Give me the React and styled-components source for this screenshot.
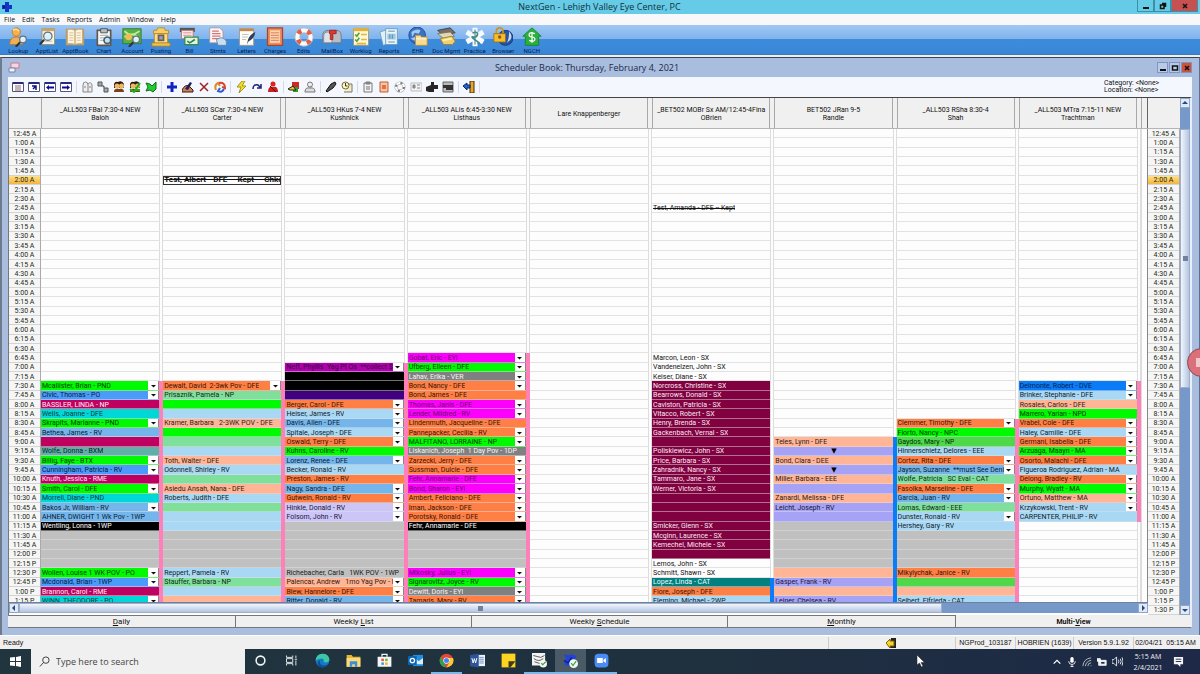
import { useState } from "react";
import styled, { createGlobalStyle } from "styled-components";

const ROWS = 52;

const tones = {
  white: ["transparent", "#111"],
  green: ["#00fa00", "#033803"],
  leaf: ["#4fd84a", "#08280a"],
  mint: ["#7fe09b", "#102a18"],
  blue: ["#4a9bfb", "#061a33"],
  royal: ["#0a7cf8", "#04204a"],
  sky: ["#74b5ec", "#0a1c2c"],
  pale: ["#a8d8f3", "#12202a"],
  cyan: ["#00d8d8", "#033838"],
  sage: ["#5fb0a8", "#08221f"],
  teal: ["#008080", "#f0fafa"],
  crimson: ["#c00060", "#fff0f7"],
  maroon: ["#800040", "#fbe8f1"],
  orange: ["#ff7f45", "#381402"],
  peach: ["#ffb596", "#301a12"],
  magenta: ["#fb00fb", "#6c006c"],
  plum: ["#b000b0", "#340034"],
  lilac: ["#ccc5f8", "#1b183c"],
  violet: ["#a6a2f5", "#17153c"],
  indigo: ["#400080", "#fff"],
  gray: ["#808080", "#f6f6f6"],
  silver: ["#c0c0c0", "#181818"],
  black: ["#000", "#fff"],
};

const times = Array.from({ length: ROWS }, (_, i) => {
  const minutes = 45 + i * 15;
  const hour = Math.floor(minutes / 60);
  const mm = String(minutes % 60).padStart(2, "0");
  return `${hour % 12 === 0 ? 12 : hour % 12}:${mm} ${hour < 12 ? "A" : "P"}`;
});

// each slot: [tone, text, has menu button]
const lunch = (n) => Array.from({ length: n }, () => ["silver"]);

const columns = [
  {
    title: "_ALL503 FBal 7:30-4 NEW",
    name: "Baloh",
    start: 27,
    strip: ["#ff80b8", 27, 52],
    slots: [
      ["green", "Mcallister, Brian - PND", 1],
      ["blue", "Civic, Thomas - PO", 1],
      ["crimson", "BASSLER, LINDA - NP"],
      ["cyan", "Wells, Joanne - DFE"],
      ["green", "Skrapits, Marianne - PND", 1],
      ["sky", "Bethea, James - RV"],
      ["crimson"],
      ["sage", "Wolfe, Donna - BXM"],
      ["green", "Billig, Faye - BTX", 1],
      ["blue", "Cunningham, Patricia - RV", 1],
      ["crimson", "Knuth, Jessica - RME"],
      ["green", "Smith, Carol - DFE", 1],
      ["cyan", "Morrell, Diane - PND"],
      ["sky", "Bakos Jr, William - RV", 1],
      ["sky", "AHNER, DWIGHT 1 Wk Pov - 1WP"],
      ["black", "Wentling, Lonna - 1WP"],
      ...lunch(4),
      ["green", "Wollen, Louise 1 WK POV - PO", 1],
      ["blue", "Mcdonald, Brian - 1WP", 1],
      ["crimson", "Brannon, Carol - RME"],
      ["cyan", "WINN, THEODORE - PO", 1],
      ["cyan"],
    ],
  },
  {
    title: "_ALL503 SCar 7:30-4 NEW",
    name: "Carter",
    start: 27,
    strip: ["#ff80b8", 27, 52],
    test: { row: 5, text: "Test, Albert - DFE -- Kept -- Chko", boxed: true },
    slots: [
      ["orange", "Dewalt, David  2-3wk Pov - DFE", 1],
      ["mint", "Prisaznik, Pamela - NP"],
      ["green"],
      ["pale"],
      ["peach", "Kramer, Barbara   2-3WK POV - DFE"],
      ["green"],
      ["mint"],
      ["pale"],
      ["peach", "Toth, Walter - DFE"],
      ["pale", "Odonnell, Shirley - RV"],
      ["mint"],
      ["peach", "Asiedu Ansah, Nana - DFE"],
      ["pale", "Roberts, Judith - DFE"],
      ["mint"],
      ["pale"],
      ["pale"],
      ...lunch(4),
      ["pale", "Reppert, Pamela - RV"],
      ["mint", "Stauffer, Barbara - NP"],
      ["pale"],
      ["peach"],
      ["peach"],
    ],
  },
  {
    title: "_ALL503 HKus 7-4 NEW",
    name: "Kushnick",
    start: 25,
    strip: ["#ff80b8", 25, 52],
    slots: [
      ["plum", "Neff, Phyllis  Yag PI Os  **collect $2", 1],
      ["black"],
      ["black"],
      ["indigo"],
      ["orange", "Berger, Carol - DFE", 1],
      ["pale", "Heiser, James - RV", 1],
      ["sky", "Davis, Allen - DFE", 1],
      ["pale", "Spitale, Joseph - DFE", 1],
      ["orange", "Oswald, Terry - DFE", 1],
      ["green", "Kuhns, Caroline - RV"],
      ["sky", "Lorenz, Renee - DFE", 1],
      ["pale", "Becker, Ronald - RV"],
      ["orange", "Preston, James - RV"],
      ["sky", "Nagy, Sandra - DFE", 1],
      ["orange", "Gutwein, Ronald - RV", 1],
      ["lilac", "Hinkle, Donald - RV", 1],
      ["lilac", "Folsom, John - RV", 1],
      ...lunch(5),
      ["silver", "Richebacher, Carla   1WK POV - 1WP"],
      ["peach", "Palencar, Andrew   1mo Yag Pov - R", 1],
      ["orange", "Blew, Hannelore - DFE", 1],
      ["sky", "Ritter, Donald - RV", 1],
      ["sky"],
    ],
  },
  {
    title: "_ALL503 ALis 6:45-3:30 NEW",
    name: "Listhaus",
    start: 24,
    strip: ["#ff80b8", 24, 52],
    slots: [
      ["magenta", "Gobat, Eric - EYI", 1],
      ["green", "Ufberg, Eileen - DFE", 1],
      ["gray", "Lahav, Erika - VER", 1],
      ["orange", "Bond, Nancy - DFE", 1],
      ["orange", "Bond, James - DFE"],
      ["magenta", "Thomas, Janis - DFE", 1],
      ["magenta", "Lender, Mildred - RV", 1],
      ["orange", "Lindenmuth, Jacqueline - DFE"],
      ["orange", "Pannepacker, Cecilia - RV", 1],
      ["green", "MALFITANO, LORRAINE - NP", 1],
      ["gray", "Liskanich, Joseph  1 Day Pov - 1DP"],
      ["orange", "Zarzecki, Jerry - DFE", 1],
      ["orange", "Sussman, Dulcie - DFE", 1],
      ["magenta", "Fehr, Annamarie - DFE", 1],
      ["magenta", "Bond, Sharon - EYI", 1],
      ["orange", "Ambert, Feliciano - DFE", 1],
      ["orange", "Iman, Jackson - DFE", 1],
      ["orange", "Porotsky, Ronald - DFE", 1],
      ["black", "Fehr, Annamarie - DFE"],
      ...lunch(4),
      ["magenta", "Mikosky, Julius - EYI", 1],
      ["green", "Signarovitz, Joyce - RV", 1],
      ["gray", "Dewitt, Doris - EYI", 1],
      ["orange", "Tamaris, Mary - RV", 1],
      ["orange"],
    ],
  },
  { title: "", name: "Lare Knappenberger", start: 52, slots: [] },
  {
    title: "_BET502 MOBr Sx AM/12:45-4Fina",
    name: "OBrien",
    start: 24,
    strip: ["#0a7cf8", 48, 52],
    test: { row: 8, text: "Test, Amanda - DFE -- Kept" },
    slots: [
      ["white", "Marcon, Leon - SX"],
      ["white", "Vandenelzen, John - SX"],
      ["white", "Keiser, Diane - SX"],
      ["maroon", "Norcross, Christine - SX"],
      ["maroon", "Bearrows, Donald - SX"],
      ["maroon", "Caviston, Patricia - SX"],
      ["maroon", "Vitacco, Robert - SX"],
      ["maroon", "Henry, Brenda - SX"],
      ["maroon", "Gackenbach, Vernal - SX"],
      ["maroon"],
      ["maroon", "Poliskiewicz, John - SX"],
      ["maroon", "Price, Barbara - SX"],
      ["maroon", "Zahradnik, Nancy - SX"],
      ["maroon", "Tammaro, Jane - SX"],
      ["maroon", "Werner, Victoria - SX"],
      ["maroon"],
      ["maroon"],
      ["maroon"],
      ["maroon", "Smicker, Glenn - SX"],
      ["maroon", "Mcginn, Laurence - SX"],
      ["maroon", "Kemechel, Michele - SX"],
      ["maroon"],
      ["white", "Lemos, John - SX"],
      ["white", "Schmitt, Shawn - SX"],
      ["teal", "Lopez, Linda - CAT"],
      ["orange", "Fiore, Joseph - DFE"],
      ["pale", "Fleming, Michael - 2WP"],
      ["pale"],
    ],
  },
  {
    title: "BET502 JRan 9-5",
    name: "Randle",
    start: 33,
    strip: ["#0a7cf8", 33, 52],
    slots: [
      ["peach", "Teles, Lynn - DFE"],
      ["violet", "▼"],
      ["peach", "Bond, Clara - DEE"],
      ["violet", "▼"],
      ["peach", "Miller, Barbara - EEE"],
      ["violet"],
      ["peach", "Zanardi, Melissa - DFE"],
      ["violet", "Leicht, Joseph - RV"],
      ["violet"],
      ...lunch(5),
      ["peach"],
      ["violet", "Gasper, Frank - RV"],
      ["peach"],
      ["violet", "Leiner, Chelsea - RV"],
      ["violet"],
    ],
  },
  {
    title: "_ALL503 RSha 8:30-4",
    name: "Shah",
    start: 31,
    strip: ["#ff80b8", 31, 52],
    slots: [
      ["orange", "Clemmer, Timothy - DFE", 1],
      ["green", "Fiorto, Nancy - NPC"],
      ["leaf", "Gaydos, Mary - NP"],
      ["pale", "Hinnerschietz, Delores - EEE"],
      ["orange", "Cortez, Rita - DFE", 1],
      ["sky", "Jayson, Suzanne  **must See Denis", 1],
      ["mint", "Wolfe, Patricia   SC Eval - CAT"],
      ["orange", "Fasolka, Marseline - DFE", 1],
      ["sky", "Garcia, Juan - RV", 1],
      ["mint", "Lomas, Edward - EEE"],
      ["pale", "Dunster, Ronald - RV", 1],
      ["pale", "Hershey, Gary - RV"],
      ...lunch(4),
      ["orange", "Mikylychak, Janice - RV"],
      ["leaf"],
      ["peach"],
      ["pale", "Seibert, Elfrieda - CAT"],
      ["pale"],
    ],
  },
  {
    title: "_ALL503 MTra 7:15-11 NEW",
    name: "Trachtman",
    start: 27,
    strip: ["#ff80b8", 27, 42],
    slots: [
      ["royal", "Delmonte, Robert - DVE", 1],
      ["pale", "Brinker, Stephanie - DFE", 1],
      ["peach", "Rosales, Carlos - DFE"],
      ["green", "Marrero, Yarian - NPD"],
      ["orange", "Vrabel, Cole - DFE", 1],
      ["pale", "Haley, Camille - DFE", 1],
      ["orange", "Germani, Isabella - DFE", 1],
      ["green", "Arzuaga, Maayn - MA", 1],
      ["orange", "Osorto, Malachi - DFE", 1],
      ["pale", "Figueroa Rodriguez, Adrian - MA"],
      ["orange", "Delong, Bradley - RV", 1],
      ["green", "Murphy, Wyatt - MA", 1],
      ["peach", "Ortuno, Matthew - MA", 1],
      ["pale", "Krzykowski, Trent - RV", 1],
      ["pale", "CARPENTER, PHILIP - RV"],
    ],
  },
];

const lens = (x, y, r = 4) => (
  <g>
    <path d={`M${x - r} ${y + r}l-4 4`} stroke="#333" strokeWidth="2.5" strokeLinecap="round" />
    <circle cx={x} cy={y} r={r} fill="#d9f0fb" stroke="#62737f" strokeWidth="1.5" />
    <path d={`M${x - 2} ${y - 1}q1-2 3-1`} stroke="#fff" fill="none" />
  </g>
);

const bigIcons = [
  ["Lookup", (
    <g>
      <circle cx="10" cy="6" r="5" fill="#f6b04a" stroke="#bd7720" />
      <path d="M2 21q0-9 8-9t8 9z" fill="#f1ae55" stroke="#b97827" />
      <path d="M6 4q4-3 7 1" stroke="#ffdc9b" strokeWidth="2" fill="none" />
      {lens(18, 15)}
    </g>
  )],
  ["ApptList", (
    <g>
      <path d="M6 2h15v19H6z" fill="#fbf3df" stroke="#9f8d65" />
      <path d="M6 2h15v3H6z" fill="#c7a66b" />
      <path d="M9 8h9M9 17h9" stroke="#9db2c1" />
      {lens(13, 11, 5)}
    </g>
  )],
  ["ApptBook", (
    <g>
      <path d="M1 2h22v20H1z" fill="#c39a67" />
      <path d="M3 3q5-1 9 1v17q-4-2-9-1zM21 3q-5-1-9 1v17q4-2 9-1z" fill="#fff4dc" stroke="#c4aa74" />
      <path d="M5 7h5M5 10h5M5 13h5M5 16h5M14 7h5M14 10h5M14 13h5M14 16h5" stroke="#cdbd9b" />
    </g>
  )],
  ["Chart", (
    <g>
      <rect x="3" y="3" width="18" height="20" rx="1" fill="#5f5750" />
      <path d="M5 5h14v16H5z" fill="#f9f9f5" />
      <path d="M8 2h8v5H8z" fill="#b6bec5" stroke="#444" />
      <path d="M7 10h10M7 13h6M7 16h5" stroke="#8da2b1" />
      <circle cx="16" cy="16" r="4" fill="#bfe5f9" stroke="#4a5b68" strokeWidth="2" />
    </g>
  )],
  ["Account", (
    <g>
      <path d="M1 2h22v18H1z" fill="#59b046" stroke="#2f782b" />
      <path d="M3 5q7 8 18 0M3 12q9-7 18 2" stroke="#c5eb9e" strokeWidth="2" fill="none" />
      <circle cx="8" cy="12" r="4" fill="#f0bd55" />
      {lens(17, 15)}
    </g>
  )],
  ["Posting", (
    <g>
      <path d="M3 8V4h4l1-3h8l1 3h4v4z" fill="#f4cf68" stroke="#b48520" />
      <path d="M4 8h16v12H4z" fill="#f8dc86" stroke="#b48520" />
      <path d="M8 9h8v8H8z" fill="#6e6050" />
      <path d="M10 11h4v4h-4z" fill="#9a9cc5" />
      <path d="M1 19h22v4H1z" fill="#ecc153" stroke="#a87a20" />
    </g>
  )],
  ["Bill", (
    <g>
      <path d="M1 1h18v5H1z" fill="#555" />
      <path d="M3 4h14v10H3z" fill="#fbecec" stroke="#bf6a6a" />
      <path d="M5 7h10M5 10h10" stroke="#d38484" />
      <path d="M7 12h16v9H7z" fill="#e2f5dc" stroke="#318a4b" strokeWidth="1.5" />
      <path d="M10 17l3 2 6-4" stroke="#2c8243" strokeWidth="2" fill="none" />
    </g>
  )],
  ["Stmts", (
    <g>
      <path d="M2 1h12l4 4v14H2z" fill="#fff4f4" stroke="#a79292" />
      <path d="M5 5h8M5 8h10M5 11h10M5 14h10" stroke="#d27474" strokeWidth="1.5" />
      <path d="M10 15q8-5 12 2v5H12z" fill="#c7dff0" stroke="#6682a1" />
    </g>
  )],
  ["Letters", (
    <g>
      <path d="M3 2h17v20H3z" fill="#fffdf5" stroke="#9c958a" />
      <path d="M3 2h17v3H3z" fill="#c98746" />
      <path d="M6 9h8M6 12h7M6 15h5" stroke="#b5b5b5" />
      <path d="M22 6q-1 8-8 11l-2 4 1-5q2-7 9-10z" fill="#2b3f5a" />
    </g>
  )],
  ["Charges", (
    <g>
      <path d="M3 1h18v21H3z" fill="#f08c5a" stroke="#a6452c" strokeWidth="1.5" />
      <path d="M6 4h12v15H6z" fill="#fbd3ae" />
      <path d="M7 7h10M7 10h10M7 13h10M7 16h10" stroke="#d3714f" strokeWidth="1" />
    </g>
  )],
  ["Edits", (
    <g fill="none">
      <circle cx="12" cy="12" r="8" stroke="#fafafa" strokeWidth="6" />
      <circle cx="12" cy="12" r="8" stroke="#e65c45" strokeWidth="6" strokeDasharray="5 7.57" strokeDashoffset="-4" />
      <circle cx="12" cy="12" r="11" stroke="#a9b4bb" />
      <circle cx="12" cy="12" r="5" stroke="#a9b4bb" />
    </g>
  )],
  ["MailBox", (
    <g>
      <path d="M1 19V10q0-6 7-6h9q6 0 6 7v8z" fill="#b6bdc4" stroke="#68727c" />
      <path d="M2 19v-8q0-5 5-5t5 5v8z" fill="#dde2e6" stroke="#77828c" />
      <path d="M9 4h8v4h-4v7h-3V8H9z" fill="#dd3a2e" stroke="#9f1f19" />
    </g>
  )],
  ["Worklog", (
    <g>
      <path d="M3 2h18v20H3z" fill="#fdf7da" stroke="#9c936d" />
      <path d="M3 1h18v4H3z" fill="#dfb23b" />
      <path d="M5 9l2 2 3-4M5 15l2 2 3-4" stroke="#55a533" strokeWidth="2" fill="none" />
      <path d="M12 9h7M12 15h7M7 20h11" stroke="#e2b63b" strokeWidth="2" />
    </g>
  )],
  ["Reports", (
    <g>
      <path d="M1 6l12-4 4 16-12 4z" fill="#dff0f8" stroke="#6b9abb" />
      <path d="M8 2h14v19H8z" fill="#e9f6fc" stroke="#6797b7" />
      <path d="M10 8h10v7H10z" fill="#9cc9e0" />
      <path d="M11 5h8M11 18h8M13 9v5M16 9v5" stroke="#4e7f9e" />
    </g>
  )],
  ["EHR", (
    <g>
      <circle cx="11" cy="10" r="10" fill="#3b72c9" stroke="#1b438d" />
      <path d="M4 6q6-5 11-2l-2 4-5-1-3 5zM3 14l5-2 2 5z" fill="#a5c9ee" />
      <path d="M9 10h6l1 2h7v10H9z" fill="#f8dc91" stroke="#bd8f34" />
      <path d="M10 14h12" stroke="#fff3c8" strokeWidth="2" />
    </g>
  )],
  ["Doc Mgmt", (
    <g>
      <path d="M2 4l15-3 6 6-15 3z" fill="#75706b" stroke="#3c3a38" />
      <path d="M2 8l15-2 5 5-13 3z" fill="#ded8b4" stroke="#77705a" />
      <path d="M5 14l14-3 4 6-3 4H9z" fill="#f2cf6d" stroke="#a47b24" />
      <path d="M8 16l11-2" stroke="#fff1b4" strokeWidth="2" />
    </g>
  )],
  ["Practice", (
    <g>
      <path d="M12 1v22M2 6l20 12M22 6L2 18" stroke="#f7fafb" strokeWidth="6" />
      <path d="M12 3v18" stroke="#708c9d" strokeWidth="1.5" />
      <path d="M9 7q7-2 6 2t-5 3 3 4 2 3" stroke="#3f8b8b" strokeWidth="2" fill="none" />
    </g>
  )],
  ["Browser", (
    <g>
      <circle cx="15" cy="13" r="9" fill="#2755a4" stroke="#17306d" />
      <path d="M19 5q5 5 2 10l-4 4q3-8 2-14z" fill="#c9d9ea" />
      <path d="M4 8V5q0-4 4-4t4 4v3" stroke="#c99626" strokeWidth="2" fill="none" />
      <path d="M1 8h14v10H1z" fill="#f4bd31" stroke="#a36d0d" />
      <circle cx="8" cy="12" r="2" fill="#925a0d" />
    </g>
  )],
  ["NGCH", (
    <g>
      <path d="M12 1l11 10h-3v11H4V11H1z" fill="#2cb03b" stroke="#138423" />
      <path d="M15.500 8q-7-2.500-7 1.500 0 2 3.500 2.500t3.500 2.500q0 4-7 1.500M12 6v13" stroke="#fff" strokeWidth="1.5" fill="none" />
    </g>
  )],
];

const calendar = (mark) => (
  <g>
    <path d="M.5 1.500h11v9H.5z" fill="#fff" stroke="#55557a" />
    <path d="M1 1h10v2H1z" fill="#262b80" />
    {mark}
  </g>
);
const face = (extra) => (
  <g>
    <path d="M1 3q1-3 4-2 4-2 6 2v4H1z" fill="#30180a" />
    <circle cx="4" cy="5" r="2.5" fill="#e9b965" />
    <circle cx="8.5" cy="5" r="2.5" fill="#e9b965" />
    <path d="M1 11q0-4 5-3 5-1 5 3z" fill="#7a4312" />
    {extra}
  </g>
);

const toolGroups = [
  [
    ["Day", calendar(<path d="M3 5h6M3 7h6M3 9h6" stroke="#8c6b6b" />)],
    ["Week", calendar(<path d="M8 9V5H4M8 5L5 8" stroke="#11118a" fill="none" strokeWidth="1.5" />)],
    ["Previous", calendar(<path d="M2 6.500l3-2.500v1.500h5v2H5V9z" fill="#0a0aa0" />)],
    ["Next", calendar(<path d="M10 6.500L7 4v1.500H2v2h5V9z" fill="#0a0aa0" />)],
  ],
  [
    ["Patients", <path key="p" d="M2 11V4q0-3 2.500-3T7 4v7M7 3q3-3 4 1v7H2M3 6h2M8 6h2" fill="#eee" stroke="#888" />],
    ["Resources", <path key="r" d="M1 1h4v4H1zM5 5h2v2M7 7h4v4H7z" fill="#aaa" stroke="#555" />],
    ["Family", face()],
    ["Check in", face(<path d="M1 8l4 3 6-9M6 9h5" stroke="#20b020" strokeWidth="2" fill="none" />)],
    ["Check out", <path key="c" d="M1 2l4 1 2 2 4-4v7l-3 3-3-2-4 1 2-4z" fill="#22cc33" stroke="#0b6d17" />],
  ],
  [
    ["Add", <path key="a" d="M4.500 1h3v3.500H11v3H7.500V11h-3V7.500H1v-3h3.500z" fill="#1022c4" />],
    ["Edit", (
      <g key="e">
        <path d="M0 9q3-6 7-4l4 4v2H0z" fill="#c78456" stroke="#3c170a" />
        <path d="M3 8l5-7 2 1-4 7z" fill="#20205a" />
      </g>
    )],
    ["Delete", <path key="d" d="M2 2l8 8M10 2l-8 8" stroke="#a02020" strokeWidth="1.5" />],
    ["Move", (
      <g key="m">
        <path d="M2 9Q0 4 4 2l2 3" fill="none" stroke="#e08a28" strokeWidth="2" />
        <path d="M5 2q6-1 6 5l-3-1" fill="none" stroke="#d8402c" strokeWidth="2" />
        <path d="M10 8q-2 4-6 2l2-3" fill="none" stroke="#2f62ce" strokeWidth="2" />
      </g>
    )],
  ],
  [
    ["Quick book", <path key="q" d="M7 0L2 6h4l-2 6 7-7H7l3-5z" fill="#f4e12b" stroke="#a59514" />],
    ["Redo", <path key="r" d="M2 8q0-5 5-4l2 2M6 7h4V3" fill="none" stroke="#1b1e79" strokeWidth="1.5" />],
    ["Person", (
      <g key="p">
        <circle cx="6" cy="3" r="2.5" fill="#d22" />
        <path d="M1 11q0-6 5-5 5-1 5 5z" fill="#cc1f1f" />
        <path d="M3 5l6 6" stroke="#500" />
      </g>
    )],
  ],
  [
    ["Shapes", (
      <g key="s">
        <path d="M4 1h7v7H4z" fill="#d02727" />
        <path d="M5 6h5v5H5z" fill="#28a12b" />
        <path d="M0 8l5-3 3 4H2z" fill="#e6c22d" stroke="#222" />
      </g>
    )],
    ["Guest", (
      <g key="g">
        <circle cx="6" cy="3.5" r="2.5" fill="#eee" stroke="#777" />
        <path d="M1 11q0-5 5-4 5-1 5 4z" fill="#ddd" stroke="#777" />
      </g>
    )],
  ],
  [
    ["Find", <path key="f" d="M1 10l5-7 4-2 1 2-3 4-6 4z" fill="#555" stroke="#111" />],
    ["History", (
      <g key="h">
        <path d="M5 3h6v8H3" fill="#f2eccc" stroke="#776" />
        <circle cx="4.5" cy="4.5" r="3.5" fill="#fff6c5" stroke="#776a2f" />
        <path d="M4.500 2v3h2" stroke="#333" fill="none" />
      </g>
    )],
  ],
  [
    ["Chart", (
      <g key="c">
        <path d="M2 2h8v9H2z" fill="#f4f4f4" stroke="#777" />
        <path d="M4 1h4v2H4zM4 6h4M4 8h4" fill="#999" stroke="#777" />
      </g>
    )],
    ["Charges", (
      <g key="g">
        <path d="M2 1h8v10H2z" fill="#f9c5a4" stroke="#c15a33" />
        <path d="M4 4h4v4H4z" fill="#de7343" />
      </g>
    )],
    ["Edits", (
      <g key="e" fill="none">
        <circle cx="6" cy="6" r="4" stroke="#aaa" strokeWidth="3" />
        <circle cx="6" cy="6" r="4" stroke="#fff" strokeWidth="2" />
        <circle cx="6" cy="6" r="4" stroke="#777" strokeWidth="2" strokeDasharray="2 4.28" />
      </g>
    )],
    ["Insurance", (
      <g key="i">
        <path d="M1 2h11v8H1z" fill="#f3f3f3" stroke="#bbb" />
        <path d="M3 4h2v3H3zM7 4h3M7 7h3" fill="#888" stroke="#888" />
      </g>
    )],
    ["Medical", <path key="m" d="M5 1h3v3h4v4H8v3H3l-3-1V6l5-2z" fill="#262626" />],
    ["Print", (
      <g key="p">
        <path d="M1 1h10v10H1z" fill="#bbb" stroke="#666" />
        <path d="M1 4h10v3H1zM4 7h7v2H4z" fill="#333" />
      </g>
    )],
  ],
  [
    ["Exit", (
      <g key="x">
        <path d="M7 0h4v12H7z" fill="#e4a72a" stroke="#442b08" />
        <path d="M0 5l4-3v2h3v3H4v2z" fill="#2463c7" stroke="#0a2b66" />
      </g>
    )],
  ],
];

const Art = ({ size, box = 24, children }) => (
  <svg width={size} height={size} viewBox={`0 0 ${box} ${box}`} aria-hidden="true">
    {children}
  </svg>
);

const CrossMark = () => (
  <Art size={12} box={12}>
    <path d="M4 1h4v3h3v4H8v3H4V8H1V4h3z" fill="#1433c8" />
    <path d="M2 4l3 2-3 2z" fill="#0a1c78" />
  </Art>
);

const taskArt = {
  cortana: <circle cx="12" cy="12" r="7" fill="none" stroke="#f2f5f6" strokeWidth="2.5" />,
  view: (
    <path d="M4 4v3h10V4M4 20v-3h10v3M4 9h10v6H4zM19 4v4M19 12v8M17 10h4" fill="none" stroke="#e6ecee" strokeWidth="1.5" />
  ),
  edge: (
    <g>
      <circle cx="12" cy="12" r="11" fill="#1479c8" />
      <path d="M1 12Q2 1 12 1q10 0 11 9 0 5-6 5-4 0-3-3 0-4-5-3-6 1-8 3z" fill="#3ec6a4" />
      <path d="M8 12q-1 8 6 8 4 0 7-3-3 6-9 6-5 0-7-4-2-6 3-7z" fill="#0c4f94" />
    </g>
  ),
  folder: (
    <g>
      <path d="M1 3h8l2 3h12v16H1z" fill="#e8b53a" />
      <path d="M1 8h22v14H1z" fill="#fbdc78" />
      <path d="M6 13h12v9h-4v-4h-4v4H6z" fill="#3e8ddb" />
    </g>
  ),
  store: (
    <g>
      <path d="M1 6h22v16H1z" fill="#f5f6f7" />
      <path d="M8 6V2h8v4" fill="none" stroke="#f5f6f7" strokeWidth="2" />
      <path d="M7 9h4v4H7z" fill="#e5532d" />
      <path d="M13 9h4v4h-4z" fill="#7bb42c" />
      <path d="M7 15h4v4H7z" fill="#2f9fe0" />
      <path d="M13 15h4v4h-4z" fill="#f4b51d" />
    </g>
  ),
  outlook: (
    <g>
      <path d="M8 3h16v18H8z" fill="#1c8fe0" />
      <path d="M12 8l5 5 7-5v10H12z" fill="#dcecf8" />
      <path d="M0 5h14v14H0z" fill="#0a64b4" />
      <circle cx="7" cy="12" r="3.5" fill="none" stroke="#fff" strokeWidth="2" />
    </g>
  ),
  chrome: (
    <g>
      <circle cx="12" cy="12" r="11" fill="#e3483a" />
      <path d="M2.500 6.500L8 14l3 9Q1 22 1 12q0-3 1.500-5.500z" fill="#2fa14f" />
      <path d="M12 8h10.500Q26 20 12 23l5-9z" fill="#fbcb2c" />
      <circle cx="12" cy="12" r="5" fill="#fff" />
      <circle cx="12" cy="12" r="4" fill="#4684ee" />
    </g>
  ),
  word: (
    <g>
      <path d="M12 3h12v18H12z" fill="#eef3fa" />
      <path d="M15 7h7M15 10h7M15 13h7M15 16h7" stroke="#2c5a9f" />
      <path d="M0 3l14-2v22L0 21z" fill="#2a5599" />
      <path d="M3 8l2 8 2-7 2 7 2-8" fill="none" stroke="#fff" strokeWidth="1.5" />
    </g>
  ),
  notes: (
    <g>
      <path d="M1 1h22v22H1z" fill="#fbd320" />
      <path d="M12 13h11l-8 10h-3z" fill="#3f3a1c" />
    </g>
  ),
  forms: (
    <g>
      <path d="M0 0h21v20H0z" fill="#f2f2f2" />
      <path d="M2 4l12 3 6-3M3 9q8 6 15 0M4 14l9 3" stroke="#555" strokeWidth="1.5" fill="none" />
      <circle cx="18" cy="17" r="6" fill="#f7f7f7" />
      <path d="M15 16l2 3 5-5" stroke="#3aa63f" strokeWidth="2" fill="none" />
    </g>
  ),
  nextgen: (
    <g>
      <path d="M1 2l9 2 4-3 3 3 5 0-3 6-5 3-3 8-8-2-2-7 4-3z" fill="#2243d8" />
      <path d="M2 12l6 4 6-9" stroke="#0e1b74" strokeWidth="2" fill="none" />
      <circle cx="17" cy="17" r="7" fill="#f4f7f2" />
      <path d="M13 16l3 4 5-7" stroke="#3aa63f" strokeWidth="2" fill="none" />
    </g>
  ),
  zoom: (
    <g>
      <rect x="1" y="1" width="22" height="22" rx="6" fill="#4a8cf6" />
      <path d="M5 8h9v8H5zM15 11l4-3v8l-4-3z" fill="#fff" />
    </g>
  ),
};

const openApps = ["chrome", "forms", "nextgen", "zoom"];

const GlobalStyle = createGlobalStyle`
  * { box-sizing: border-box; }
  body {
    margin: 0;
    overflow: hidden;
    background: #f0f0f0;
    color: #111;
    font-family: Roboto, "Liberation Sans", sans-serif;
    font-size: 7px;
  }
  button {
    margin: 0;
    padding: 0;
    border: 0;
    background: none;
    color: inherit;
    font: inherit;
  }
  svg { display: block; flex: none; }
`;

const Desktop = styled.div`
  position: relative;
  display: flex;
  flex-direction: column;
  height: 100vh;
`;

const TitleBar = styled.header`
  display: grid;
  grid-template-columns: 1fr auto 1fr;
  align-items: center;
  height: 14px;
  padding: 0 2px 0 1px;
  background: #66cbe6;
  color: #12303c;
  font-family: "Open Sans", sans-serif;
  font-size: 9px;
  line-height: 14px;
`;

const WindowButtons = styled.div`
  display: flex;
  justify-content: flex-end;
  align-self: start;
`;

const WindowButton = styled.button`
  display: grid;
  place-items: center;
  width: ${(p) => (p.$close ? 27 : 17)}px;
  height: 12px;
  border: 1px solid #3e8ea8;
  border-top: 0;
  background: ${(p) => (p.$close ? "#c75050" : "transparent")};
`;

const MenuBar = styled.nav`
  display: flex;
  gap: 7px;
  height: 11px;
  padding: 0 4px;
  background: #f8f8fa;
  font-family: "Open Sans", sans-serif;
  line-height: 12px;
`;

const Toolbar = styled.div`
  height: 30px;
  padding: 2px 4px 0;
  border-bottom: 1px solid #3e78b8;
  background: linear-gradient(#a0c8f4, #7fb2ec 48%, #3d8cdc 50%, #3a86d6);
`;

const ToolbarItems = styled.div`
  display: flex;
  width: 542px;
`;

const ToolbarButton = styled.button`
  display: flex;
  flex: 1 1 0;
  flex-direction: column;
  align-items: center;
  min-width: 0;
  color: #052050;
  font-size: 6px;
  line-height: 8px;
  white-space: nowrap;
`;

const Workspace = styled.main`
  display: flex;
  flex: 1;
  flex-direction: column;
  min-height: 0;
  margin-top: 2px;
  padding: 0 7px 7px 6px;
  border-top: 1px solid #3b4654;
  border-left: 2px solid #6d7b8c;
  border-right: 1px solid #5a6f94;
  background: #a9bddf;
`;

const BookTitle = styled.div`
  display: grid;
  grid-template-columns: 1fr auto 1fr;
  align-items: center;
  height: 19px;
  color: #1c2a48;
  font-family: "Open Sans", sans-serif;
  font-size: 9px;
`;

const BookName = styled.span`
  padding-right: 26px;
`;

const BookButtons = styled(WindowButtons)`
  align-self: center;
`;

const BookButton = styled.button`
  display: grid;
  place-items: center;
  width: 11px;
  height: 11px;
  margin-left: 1px;
  border: 1px solid #7f95bd;
  background: ${(p) => (p.$close ? "#d0503c" : "#b9cae8")};
`;

const BookTools = styled.div`
  display: flex;
  align-items: center;
  height: 20px;
  padding: 0 4px;
  background: #f4f8fe;
`;

const ToolGroup = styled.div`
  display: flex;
  gap: 4px;
  margin-right: 4px;
  padding-right: 4px;
  border-right: 1px solid #d3dae6;
`;

const BookFilter = styled.div`
  width: 84px;
  margin-left: auto;
  line-height: 7px;
`;

const Book = styled.section`
  display: flex;
  flex: 1;
  min-height: 0;
  border-top: 1px solid #444;
  border-left: 1px solid #777;
  border-right: 2px solid #e8eefa;
  background: #fdfdfd;
`;

const BookMain = styled.div`
  display: flex;
  flex: 1;
  flex-direction: column;
  min-width: 0;
`;

const HeaderRow = styled.div`
  display: flex;
  flex: none;
  height: 31px;
  border-bottom: 1px solid #b4b4b4;
  background: #f0f0f0;
`;

const HeaderCell = styled.div`
  display: flex;
  flex: 1 1 0;
  flex-direction: column;
  justify-content: center;
  align-items: center;
  min-width: 0;
  margin-right: 4px;
  padding-top: 2px;
  border-right: 1px solid #a8a8a8;
  border-left: 1px solid #a8a8a8;
  line-height: 8px;
  white-space: nowrap;
`;

const Corner = styled.div`
  flex: none;
  width: 32px;
`;

const HeaderTail = styled.div`
  width: 7px;
  border-left: 1px solid #a8a8a8;
  border-right: 1px solid #666;
`;

const SheetClip = styled.div`
  flex: 1;
  min-height: 0;
  overflow: hidden;
`;

const Sheet = styled.div`
  display: flex;
  height: calc(100% + 13px);
`;

const TimeGrid = styled.div`
  display: grid;
  flex: none;
  grid-template-rows: repeat(${ROWS}, minmax(0, 1fr));
  width: 32px;
  border-right: 1px solid #aaa;
  background: #f6f6f6;
`;

const TimeCell = styled.div`
  display: flex;
  justify-content: center;
  align-items: center;
  min-height: 0;
  padding-top: 1px;
  border-bottom: 1px solid #d4d4d4;
  background: ${(p) => (p.$now ? "linear-gradient(#ffe08a, #f5b33a)" : "transparent")};
  color: #1c2a14;
  line-height: 8px;
`;

const DayColumn = styled.div`
  display: flex;
  flex: 1 1 0;
  min-width: 0;
`;

const SlotGrid = styled.div`
  display: grid;
  flex: 1;
  grid-template-rows: repeat(${ROWS}, minmax(0, 1fr));
  min-width: 0;
`;

const Slot = styled.div`
  display: flex;
  justify-content: space-between;
  align-items: center;
  min-width: 0;
  min-height: 0;
  padding-left: 1px;
  border-bottom: 1px solid ${(p) => (p.$tone === "white" ? "#e2e2e2" : "rgba(225, 225, 225, 0.5)")};
  background: ${(p) => tones[p.$tone][0]};
  color: ${(p) => tones[p.$tone][1]};
  line-height: 8px;
  white-space: pre;
`;

const SlotText = styled.span`
  overflow: hidden;
  min-width: 0;
  padding-top: 1px;
`;

const TestSlot = styled(Slot)`
  overflow: hidden;
  outline: ${(p) => (p.$boxed ? "1px solid #333" : "none")};
  outline-offset: -1px;
  font-size: ${(p) => (p.$boxed ? 8 : 7)}px;
  font-weight: ${(p) => (p.$boxed ? 700 : 400)};
  text-decoration: line-through;
`;

const More = styled.span`
  margin: 0 auto;
  color: #000;
  font-family: "DejaVu Sans", sans-serif;
`;

const SlotMenu = styled.button`
  display: grid;
  place-items: center;
  flex: none;
  align-self: stretch;
  width: 11px;
  border-right: 1px solid #888;
  background: #fff;
`;

const Strip = styled.div`
  display: grid;
  flex: none;
  grid-template-rows: repeat(${ROWS}, minmax(0, 1fr));
  width: 4px;
  border-left: 1px solid #ddd;
  border-right: 1px solid #ddd;
`;

const StripFill = styled.div`
  grid-row: ${(p) => p.$from + 1} / ${(p) => p.$to + 1};
  margin: 0 -1px;
  background: ${(p) => p.$color};
`;

const SheetTail = styled.div`
  flex: none;
  width: 7px;
  border-left: 1px solid #ddd;
  border-right: 1px solid #888;
`;

const HScroll = styled.div`
  display: flex;
  flex: none;
  height: 11px;
  margin-bottom: 2px;
  border-top: 1px solid #70809c;
  background: #7699c9;
`;

const VScroll = styled.div`
  display: flex;
  flex: none;
  flex-direction: column;
  width: 10px;
  background: #7699c9;
`;

const ArrowButton = styled.button`
  display: grid;
  place-items: center;
  flex: none;
  width: 10px;
  height: 10px;
  border: 1px solid #8fa6c9;
  background: #dfe9f8;
`;

const HThumb = styled.div`
  display: grid;
  place-items: center;
  flex: 0 0 81%;
  border: 1px solid #9cafcf;
  background: linear-gradient(#f2f6fc, #b4c5e0);
`;

const VThumb = styled.div`
  display: grid;
  place-items: center;
  flex: 0 0 50%;
  margin-top: 21px;
  border: 1px solid #9cafcf;
  background: linear-gradient(90deg, #f2f6fc, #b4c5e0);
`;

const Grip = styled.i`
  width: 5px;
  height: 5px;
  background: #71819e;
`;

const Track = styled.div`
  flex: 1;
`;

const Gutter = styled.div`
  display: flex;
  flex: none;
  flex-direction: column;
  width: 32px;
`;

const GutterHead = styled.div`
  flex: none;
  height: 31px;
  border-bottom: 1px solid #b4b4b4;
  background: #f0f0f0;
`;

const GutterTimes = styled(TimeGrid)`
  flex: 1;
  width: auto;
  min-height: 0;
`;

const ViewTabs = styled.div`
  display: grid;
  flex: none;
  grid-template-columns: 228fr 236fr 256fr 228fr 236fr;
  height: 13px;
  background: #f0f0f0;
`;

const ViewTab = styled.button`
  border-top: 1px solid ${(p) => (p.$active ? "transparent" : "#777")};
  border-right: 1px solid ${(p) => (p.$active ? "transparent" : "#777")};
  border-bottom: 1px solid #777;
  font-weight: ${(p) => (p.$active ? 700 : 400)};
  font-size: ${(p) => (p.$active ? 7 : 8)}px;
  line-height: 10px;
`;

const StatusBar = styled.footer`
  display: flex;
  align-items: center;
  flex: none;
  height: 14px;
  padding: 0 3px;
  border-top: 1px solid #fff;
  background: #f0f0f0;
  font-family: "Liberation Sans", sans-serif;
`;

const StatusText = styled.span`
  flex: 1;
`;

const StatusCell = styled.div`
  display: flex;
  justify-content: center;
  flex: none;
  width: ${(p) => p.$width}px;
  border-left: 1px solid #ccc;
  line-height: 12px;
  white-space: pre;
`;

const TaskBar = styled.div`
  display: flex;
  flex: none;
  height: 25px;
  background: linear-gradient(90deg, #20353d, #1f303f 60%, #1d2947);
  color: #eef2f5;
  font-family: "Open Sans", sans-serif;
`;

const StartButton = styled.button`
  display: grid;
  place-items: center;
  width: 31px;
`;

const SearchBox = styled.label`
  display: flex;
  align-items: center;
  gap: 6px;
  width: 214px;
  padding-left: 8px;
  background: #f0f0f0;
`;

const SearchInput = styled.input`
  flex: 1;
  min-width: 0;
  padding: 0;
  border: 0;
  outline: 0;
  background: none;
  font: 9px "Open Sans", sans-serif;
  &::placeholder {
    color: #444;
    opacity: 1;
  }
`;

const TaskButton = styled.button`
  display: grid;
  place-items: center;
  width: 31px;
  border-bottom: 2px solid ${(p) => (p.$open ? "#76b9ed" : "transparent")};
  background: ${(p) => (p.$active ? "#4a5a66" : "transparent")};
`;

const Tray = styled.div`
  display: flex;
  align-items: center;
  gap: 5px;
  margin-left: auto;
  padding-right: 16px;
`;

const Clock = styled.div`
  width: 40px;
  line-height: 11px;
  text-align: center;
`;

const RecordBubble = styled.div`
  position: absolute;
  top: 348px;
  right: -16px;
  width: 29px;
  height: 29px;
  border: 1px solid #8d4a50;
  border-radius: 50%;
  background: #d9707a;
  &::after {
    content: "";
    position: absolute;
    top: 9px;
    left: 8px;
    width: 8px;
    height: 9px;
    background: #f0c8cc;
  }
`;

const Pointer = styled.div`
  position: absolute;
  left: 916px;
  bottom: 7px;
`;

const DayView = ({ column }) => {
  const { start, slots, strip, test } = column;
  return (
    <DayColumn>
      <SlotGrid>
        {times.map((time, i) => {
          if (test && test.row === i) {
            return (
              <TestSlot key={time} $tone="white" $boxed={test.boxed}>
                <SlotText>{test.text}</SlotText>
              </TestSlot>
            );
          }
          const [tone, text, menu] = slots[i - start] || ["white"];
          return (
            <Slot key={time} $tone={tone}>
              {text === "▼" ? <More>{text}</More> : <SlotText>{text}</SlotText>}
              {menu && (
                <SlotMenu aria-label={`Options for ${text}`}>
                  <Art size={5} box={5}>
                    <path d="M0 2h5L2.500 4.500z" fill="#111" />
                  </Art>
                </SlotMenu>
              )}
            </Slot>
          );
        })}
      </SlotGrid>
      <Strip>{strip && <StripFill $color={strip[0]} $from={strip[1]} $to={strip[2]} />}</Strip>
    </DayColumn>
  );
};

const TimeCells = () =>
  times.map((time) => (
    <TimeCell key={time} $now={time === "2:00 A"}>
      {time}
    </TimeCell>
  ));

const Arrow = ({ d, label }) => (
  <ArrowButton aria-label={label}>
    <Art size={6} box={6}>
      <path d={d} fill="#2c4676" />
    </Art>
  </ArrowButton>
);

const Glyph = ({ d, weight = 2 }) => (
  <Art size={8} box={8}>
    <path d={d} fill="none" stroke="#111" strokeWidth={weight} />
  </Art>
);

const MIN = "M1 6h6";
const CLOSE = "M2 2l4 4M6 2L2 6";

function App() {
  const [search, setSearch] = useState("");

  return (
    <>
      <GlobalStyle />
      <Desktop>
        <TitleBar>
          <CrossMark />
          <span>NextGen - Lehigh Valley Eye Center, PC</span>
          <WindowButtons>
            <WindowButton aria-label="Minimize"><Glyph d={MIN} /></WindowButton>
            <WindowButton aria-label="Restore"><Glyph d="M1.500 3h3.500v3.500H1.500zM3 1.500h3.500V5" weight={1.5} /></WindowButton>
            <WindowButton aria-label="Close" $close><Glyph d={CLOSE} weight={1.5} /></WindowButton>
          </WindowButtons>
        </TitleBar>
        <MenuBar>
          {["File", "Edit", "Tasks", "Reports", "Admin", "Window", "Help"].map((item) => (
            <button key={item}>{item}</button>
          ))}
        </MenuBar>
        <Toolbar>
          <ToolbarItems>
            {bigIcons.map(([label, art]) => (
              <ToolbarButton key={label}>
                <Art size={20}>{art}</Art>
                {label}
              </ToolbarButton>
            ))}
          </ToolbarItems>
        </Toolbar>

        <Workspace>
          <BookTitle>
            <Art size={12} box={12}>
              <path d="M3 1h8v5H3z" fill="#f5d5df" stroke="#c67b92" />
              <path d="M1 6h6v4H1z" fill="#eef2fb" stroke="#7886ae" />
            </Art>
            <BookName>Scheduler Book: Thursday, February 4, 2021</BookName>
            <BookButtons>
              <BookButton aria-label="Minimize book"><Glyph d={MIN} /></BookButton>
              <BookButton aria-label="Maximize book"><Glyph d="M1.500 2h5v4h-5z" weight={1.5} /></BookButton>
              <BookButton aria-label="Close book" $close><Glyph d={CLOSE} weight={1.5} /></BookButton>
            </BookButtons>
          </BookTitle>
          <BookTools>
            {toolGroups.map((group) => (
              <ToolGroup key={group[0][0]}>
                {group.map(([label, art]) => (
                  <button key={label} aria-label={label}>
                    <Art size={12} box={12}>{art}</Art>
                  </button>
                ))}
              </ToolGroup>
            ))}
            <BookFilter>
              <div>Category: &lt;None&gt;</div>
              <div>Location: &lt;None&gt;</div>
            </BookFilter>
          </BookTools>

          <Book>
            <BookMain>
              <HeaderRow>
                <Corner />
                {columns.map((c) => (
                  <HeaderCell key={c.name}>
                    {c.title && <span>{c.title}</span>}
                    <span>{c.name}</span>
                  </HeaderCell>
                ))}
                <HeaderTail />
              </HeaderRow>
              <SheetClip>
                <Sheet>
                  <TimeGrid><TimeCells /></TimeGrid>
                  {columns.map((c) => (
                    <DayView key={c.name} column={c} />
                  ))}
                  <SheetTail />
                </Sheet>
              </SheetClip>
              <HScroll>
                <Arrow label="Scroll left" d="M4 0v6L1 3z" />
                <HThumb><Grip /></HThumb>
                <Track />
                <Arrow label="Scroll right" d="M2 0v6l3-3z" />
              </HScroll>
            </BookMain>
            <Gutter>
              <GutterHead />
              <GutterTimes><TimeCells /></GutterTimes>
            </Gutter>
            <VScroll>
              <Arrow label="Scroll up" d="M0 4h6L3 1z" />
              <VThumb><Grip /></VThumb>
              <Track />
              <Arrow label="Scroll down" d="M0 2h6L3 5z" />
            </VScroll>
          </Book>
          <ViewTabs>
            <ViewTab><u>D</u>aily</ViewTab>
            <ViewTab>Weekly <u>L</u>ist</ViewTab>
            <ViewTab>Weekly <u>S</u>chedule</ViewTab>
            <ViewTab><u>M</u>onthly</ViewTab>
            <ViewTab $active>Multi-<u>V</u>iew</ViewTab>
          </ViewTabs>
        </Workspace>

        <StatusBar>
          <StatusText>Ready</StatusText>
          <StatusCell $width={127}>
            <Art size={12} box={12}>
              <path d="M5 1h5v10H4z" fill="#222" />
              <path d="M0 6l4-4v2h4v5H4v2z" fill="#f5d22c" stroke="#7c6306" />
            </Art>
          </StatusCell>
          <StatusCell $width={60}>NGProd_103187</StatusCell>
          <StatusCell $width={58}>HOBRIEN (1639)</StatusCell>
          <StatusCell $width={60}>Version 5.9.1.92</StatusCell>
          <StatusCell $width={64}>{"02/04/21  05:15 AM"}</StatusCell>
        </StatusBar>

        <TaskBar>
          <StartButton aria-label="Start">
            <Art size={11} box={11}>
              <path d="M0 1.500L5 1v4H0zM6 1l5-1v5H6zM0 6h5v4L0 9.500zM6 6h5v5l-5-1z" fill="#fff" />
            </Art>
          </StartButton>
          <SearchBox>
            <Art size={11} box={12}>
              <circle cx="7.5" cy="4.5" r="3.5" fill="none" stroke="#333" />
              <path d="M5 7l-4 4.500" stroke="#333" />
            </Art>
            <SearchInput
              type="text"
              aria-label="Search"
              placeholder="Type here to search"
              value={search}
              onChange={(e) => setSearch(e.target.value)}
            />
          </SearchBox>
          {Object.keys(taskArt).map((kind) => (
            <TaskButton
              key={kind}
              aria-label={kind}
              $open={openApps.includes(kind)}
              $active={kind === "nextgen"}
            >
              <Art size={15}>{taskArt[kind]}</Art>
            </TaskButton>
          ))}
          <Tray>
            <Art size={10} box={12}>
              <path d="M2 8l4-4 4 4" fill="none" stroke="#fff" strokeWidth="1.5" />
            </Art>
            <Art size={10} box={12}>
              <rect x="4" y="0" width="4" height="7" rx="2" fill="#fff" />
              <path d="M2 5q0 4 4 4t4-4M6 9v3M4 11.500h4" stroke="#fff" fill="none" />
            </Art>
            <Art size={10} box={12}>
              <path d="M1 11Q2 2 11 1M4 11q1-6 7-7M7 11q0-4 4-4M10 11l1-1" stroke="#c8d0d6" fill="none" />
            </Art>
            <Art size={10} box={12}>
              <path d="M2 4h9v6H2zM0 2h4v3H0z" fill="#e8ecef" stroke="#fff" />
              <path d="M5 6h4v2H5z" fill="#1d2947" />
            </Art>
            <Art size={11} box={12}>
              <path d="M0 4h2l3-3v10L2 8H0zM7 4q1 2 0 4M9 3q2 3 0 6M11 1.500q2 4 0 9" fill="none" stroke="#e8ecef" />
            </Art>
            <Clock>
              <div>5:15 AM</div>
              <div>2/4/2021</div>
            </Clock>
            <Art size={11} box={12}>
              <path d="M1 1h10v8H8v3L5 9H1z" fill="#f2f4f6" />
              <path d="M3 3.500h6M3 6h6" stroke="#1d2947" />
            </Art>
          </Tray>
        </TaskBar>
        <RecordBubble />
        <Pointer>
          <Art size={12} box={12}>
            <path d="M1 0v10l2.500-2 2 4 1.500-1-2-3.500h3.500z" fill="#fff" stroke="#222" strokeWidth=".5" />
          </Art>
        </Pointer>
      </Desktop>
    </>
  );
}

export default App;
